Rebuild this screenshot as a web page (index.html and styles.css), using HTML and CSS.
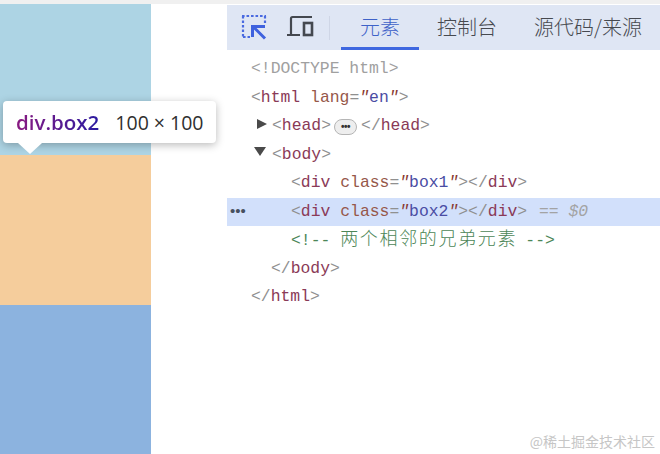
FILE: index.html
```html
<!DOCTYPE html>
<html lang="zh">
<head>
<meta charset="utf-8">
<title>DevTools</title>
<link rel="stylesheet" href="styles.css">
</head>
<body>
<div class="page">
  <div class="topband"></div>
  <div class="main">
    <div class="boxes">
      <div class="box box-a"></div>
      <div class="box box-b"></div>
      <div class="box box-a2"></div>
    </div>
    <div class="devtools">
      <div class="toolbar">
        <svg class="ic-inspect" width="26" height="26" viewBox="0 0 26 26">
          <path d="M1 1H25M2 1V23M2 22H9M24 1V8" fill="none" stroke="#4a6ae0" stroke-width="2.200" stroke-dasharray="2.600 1.900"/>
          <path d="M24 23.500 L12 11.500 M11.500 22 V11.500 H24" fill="none" stroke="#3f62de" stroke-width="3"/>
        </svg>
        <svg class="ic-device" width="28" height="22" viewBox="0 0 28 22">
          <path d="M5 20V3.500a1.500 1.500 0 0 1 1.500-1.500H26M1 20h13" fill="none" stroke="#44484f" stroke-width="2.200"/>
          <rect x="18" y="8" width="8" height="12" fill="none" stroke="#44484f" stroke-width="2.600"/>
        </svg>
        <div class="sep"></div>
        <div class="tab tab-on">元素</div>
        <div class="tab">控制台</div>
        <div class="tab">源代码/来源</div>
      </div>
      <div class="code">
        <div class="line ind0"><span class="g">&lt;!DOCTYPE html&gt;</span></div>
        <div class="line ind0"><span class="p">&lt;</span><span class="t">html</span> <span class="a">lang</span><span class="p">=</span><span class="q">"</span><span class="v">en</span><span class="q">"</span><span class="p">&gt;</span></div>
        <div class="line ind1"><span class="tri tri-r"></span><span class="p">&lt;</span><span class="t">head</span><span class="p">&gt;</span><span class="pill">•••</span><span class="p">&lt;/</span><span class="t">head</span><span class="p">&gt;</span></div>
        <div class="line ind1"><span class="tri tri-d"></span><span class="p">&lt;</span><span class="t">body</span><span class="p">&gt;</span></div>
        <div class="line ind2"><span class="p">&lt;</span><span class="t">div</span> <span class="a">class</span><span class="p">=</span><span class="q">"</span><span class="v">box1</span><span class="q">"</span><span class="p">&gt;&lt;/</span><span class="t">div</span><span class="p">&gt;</span></div>
        <div class="line ind2 sel"><span class="dots">•••</span><span class="p">&lt;</span><span class="t">div</span> <span class="a">class</span><span class="p">=</span><span class="q">"</span><span class="v">box2</span><span class="q">"</span><span class="p">&gt;&lt;/</span><span class="t">div</span><span class="p">&gt;</span> <span class="eq">== $0</span></div>
        <div class="line ind2"><span class="c">&lt;!-- <span class="cjk">两个相邻的兄弟元素</span> --&gt;</span></div>
        <div class="line ind3"><span class="p">&lt;/</span><span class="t">body</span><span class="p">&gt;</span></div>
        <div class="line ind0"><span class="p">&lt;/</span><span class="t">html</span><span class="p">&gt;</span></div>
      </div>
    </div>
  </div>
  <div class="tip">
    <span class="tip-name">div.box2</span><span class="tip-size">100 × 100</span>
    <span class="tip-arrow"></span>
  </div>
  <div class="mark">@稀土掘金技术社区</div>
</div>
</body>
</html>
```
FILE: styles.css
```css
* { box-sizing: border-box; }
html, body { margin: 0; padding: 0; }
body { background: #fff; overflow: hidden; }
.page {
  position: relative;
  width: 660px;
  height: 454px;
  display: flex;
  flex-direction: column;
  overflow: hidden;
}
.topband { height: 4px; background: #f0f0f0; flex: none; }
.main { display: flex; flex: 1; min-height: 0; }
.boxes { width: 151px; flex: none; display: flex; flex-direction: column; }
.box { height: 150px; flex: none; }
.box-a { height: 151px; background: #add4e4; }
.box-b { background: #f5cd9c; }
.box-a2 { background: #8cb3df; }
.devtools { margin-left: 76px; flex: 1; min-width: 0; }
.toolbar {
  height: 45px;
  margin-top: 1px;
  background: #dfe6f4;
  display: flex;
  align-items: center;
  padding-left: 14px;
}
.ic-inspect { flex: none; margin-top: 1px; }
.ic-device { flex: none; margin-left: 19px; margin-bottom: 3px; }
.sep { width: 1px; height: 24px; background: #cfd6e6; margin: 0 11px 0 15px; flex: none; }
.tab {
  height: 45px;
  line-height: 43px;
  padding: 0 18px;
  font-family: "Noto Sans CJK SC", sans-serif;
  font-size: 20px;
  font-weight: 300;
  color: #46494f;
  flex: none;
}
.tab:last-child { padding-left: 19px; }
.tab-on { padding: 0 19px; color: #3e62c8; border-bottom: 3px solid #3f68e0; }
.code {
  font-family: "Liberation Mono", "Noto Sans CJK SC", monospace;
  font-size: 16.400px;
  padding-top: 5px;
}
.line {
  position: relative;
  height: 28.500px;
  line-height: 28.500px;
  white-space: pre;
}
.ind0 { padding-left: 24px; }
.ind1 { padding-left: 45px; }
.ind2 { padding-left: 64px; }
.ind3 { padding-left: 44px; }
.sel { background: #d2e0fb; }
.g { color: #a0a0a0; }
.p { color: #909090; }
.t { color: #8a3a57; }
.a { color: #96574a; }
.q { color: #8a3b33; font-style: italic; }
.v { color: #4a4ca3; }
.c { color: #4c8657; }
.cjk { font-size: 18px; letter-spacing: 1.660px; font-weight: 300; margin-right: -1.660px; }
.eq { color: #a3a3a3; font-style: italic; margin-left: 2px; }
.tri { position: absolute; width: 0; height: 0; }
.tri-r {
  left: 30px;
  top: 7px;
  border-left: 10px solid #4a4a4a;
  border-top: 5.500px solid transparent;
  border-bottom: 5.500px solid transparent;
}
.tri-d {
  left: 27px;
  top: 6px;
  border-top: 9px solid #4a4a4a;
  border-left: 6.500px solid transparent;
  border-right: 6.500px solid transparent;
}
.pill {
  display: inline-block;
  width: 23px;
  height: 16px;
  line-height: 13px;
  margin: 0 4px 0 3px;
  border: 1px solid #b5b5b5;
  border-radius: 8px;
  background: #eeeeee;
  color: #333;
  font-family: "Liberation Sans", sans-serif;
  font-size: 10px;
  font-weight: 700;
  text-align: center;
  vertical-align: 0;
  letter-spacing: -0.500px;
}
.dots {
  position: absolute;
  left: 3px;
  top: -1px;
  color: #47505f;
  font-family: "Liberation Sans", sans-serif;
  font-size: 15px;
}
.tip {
  position: absolute;
  left: 3px;
  top: 101px;
  width: 213px;
  height: 42px;
  display: flex;
  align-items: center;
  padding-left: 13px;
  background: #fff;
  border-radius: 4px;
  box-shadow: 0 2px 8px rgba(0, 0, 0, 0.28);
  font-family: "Open Sans", "Liberation Sans", sans-serif;
  font-size: 20.500px;
  white-space: nowrap;
}
.tip-name {
  font-weight: 600;
  background: linear-gradient(90deg, #8a1a80, #2a1aa0);
  -webkit-background-clip: text;
  background-clip: text;
  color: transparent;
}
.tip-size { color: #2f2f2f; margin-left: 16px; font-size: 19.500px; }
.tip-arrow {
  position: absolute;
  left: 15px;
  top: 42px;
  width: 0;
  height: 0;
  border-top: 11px solid #fff;
  border-left: 12px solid transparent;
  border-right: 12px solid transparent;
}
.mark {
  position: absolute;
  right: 5px;
  bottom: 3px;
  font-family: "Noto Sans CJK SC", sans-serif;
  font-size: 14px;
  line-height: 20px;
  color: #c6c6c6;
}
```
